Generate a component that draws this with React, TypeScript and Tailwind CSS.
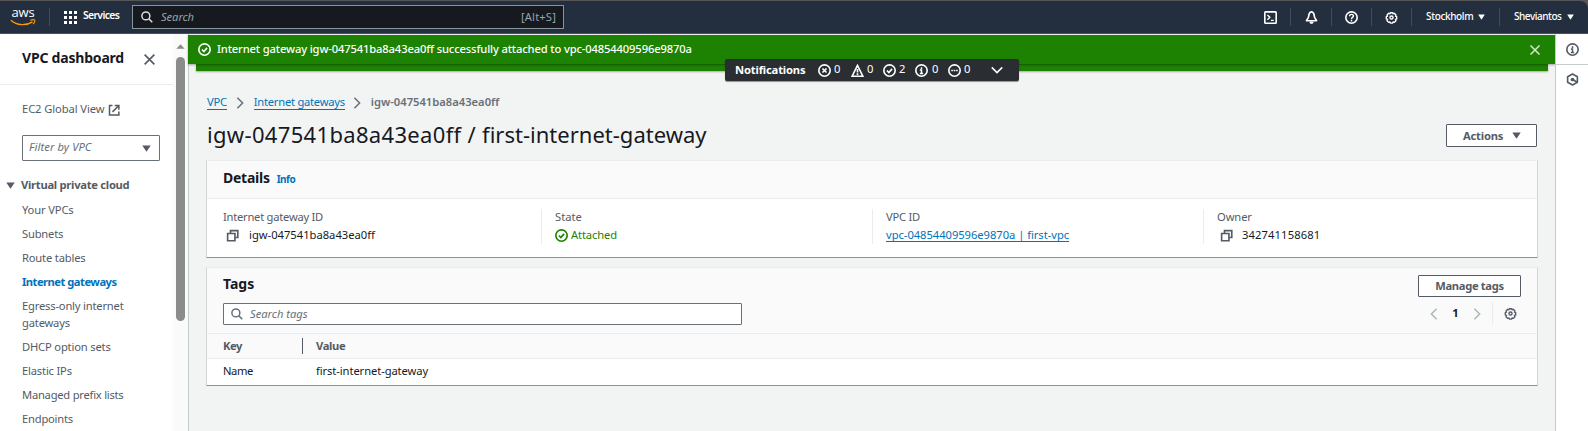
import React, { ReactNode } from "react";

type IconProps = { className?: string };

function Svg({ className = "", children }: { className?: string; children: ReactNode }) {
  return (
    <svg viewBox="0 0 16 16" fill="none" stroke="currentColor" strokeWidth="2" className={`shrink-0 ${className}`}>
      {children}
    </svg>
  );
}

const SearchIcon = ({ className }: IconProps) => (
  <Svg className={className}>
    <circle cx="6.5" cy="6.5" r="5.3" />
    <path d="M15 15l-4.8-4.8" />
  </Svg>
);
const CloseIcon = ({ className }: IconProps) => (
  <Svg className={className}>
    <path d="M2 2l12 12M14 2L2 14" />
  </Svg>
);
const CheckCircle = ({ className }: IconProps) => (
  <Svg className={className}>
    <circle cx="8" cy="8" r="7" />
    <path d="M4.8 8l2.4 2.4L11.2 6" />
  </Svg>
);
const XCircle = ({ className }: IconProps) => (
  <Svg className={className}>
    <circle cx="8" cy="8" r="7" />
    <path d="M5.5 5.5l5 5M10.5 5.5l-5 5" />
  </Svg>
);
const Warning = ({ className }: IconProps) => (
  <Svg className={className}>
    <path d="M8 1.8L1.4 15h13.2z" />
    <path d="M8 6v4.5M8 11.5v2" />
  </Svg>
);
const InfoCircle = ({ className }: IconProps) => (
  <Svg className={className}>
    <circle cx="8" cy="8" r="7" />
    <path d="M8 4v2M6 7.5h2V12M6 11.6h4" strokeWidth="1.8" />
  </Svg>
);
const PendingCircle = ({ className }: IconProps) => (
  <Svg className={className}>
    <circle cx="8" cy="8" r="7" />
    <path d="M4 8h2M7 8h2M10 8h2" />
  </Svg>
);
const HelpCircle = ({ className }: IconProps) => (
  <Svg className={className}>
    <circle cx="8" cy="8" r="7" />
    <path d="M5.6 6.4C5.6 3.4 10.4 3.4 10.4 6.3 10.4 8 8 7.9 8 9.8M8 10.9v1.9" strokeWidth="1.8" />
  </Svg>
);
const Gear = ({ className }: IconProps) => (
  <Svg className={className}>
    <path d="M6.6 1.2h2.8l.5 1.3 1.6-.6 2 2-.6 1.6 1.5.6v2.8l-1.5.6.6 1.6-2 2-1.6-.6-.5 1.5H6.6l-.5-1.5-1.6.6-2-2 .6-1.6-1.5-.6V6.1l1.5-.6-.6-1.6 2-2 1.6.6z" strokeWidth="1.7" strokeLinejoin="round" transform="translate(0 .9)" />
    <circle cx="8" cy="8" r="1.9" strokeWidth="1.7" />
  </Svg>
);
const Bell = ({ className }: IconProps) => (
  <Svg className={className}>
    <path d="M8 1C5.4 1.6 4.6 4 4.5 6.5C4.4 9 2.5 9.5 1.8 12H14.2C13.5 9.5 11.6 9 11.5 6.5C11.4 4 10.6 1.6 8 1z" strokeLinejoin="round" />
    <path d="M6 13.5a2 2 0 0 0 4 0z" fill="currentColor" strokeWidth="1" />
  </Svg>
);
const Terminal = ({ className }: IconProps) => (
  <Svg className={className}>
    <rect x="1" y="1" width="14" height="14" rx="1" />
    <path d="M4.2 4.8L7.2 7.8 4.2 10.8M8.5 11.5h3.5" strokeWidth="1.7" />
  </Svg>
);
const Copy = ({ className }: IconProps) => (
  <Svg className={className}>
    <path d="M2 5.5h9v9H2z" />
    <path d="M5.5 5V2H14.5v8.5H11.5" />
  </Svg>
);
const External = ({ className }: IconProps) => (
  <Svg className={className}>
    <path d="M6 2H2v12.5h12.5V10" />
    <path d="M9 2h5.5v5.5M14.5 2L6 10.5" />
  </Svg>
);
const Hexagon = ({ className }: IconProps) => (
  <Svg className={className}>
    <path d="M8 1.2l6 3.4v6.8l-6 3.4-6-3.4V4.6z" strokeLinejoin="round" />
    <circle cx="8" cy="8" r="2.3" fill="currentColor" stroke="none" />
    <path d="M8 8l5.5 3" />
  </Svg>
);
const Caret = ({ className = "" }: IconProps) => (
  <svg viewBox="0 0 10 8" preserveAspectRatio="none" className={`shrink-0 ${className}`} fill="currentColor">
    <path d="M.3.5h9.4L5 7.8z" />
  </svg>
);
const Chevron = ({ className }: IconProps) => (
  <Svg className={className}>
    <path d="M4.5 1l7 7-7 7" />
  </Svg>
);

const Divider = ({ className = "" }: IconProps) => <span className={`h-[18px] w-px shrink-0 bg-[#414d5c] ${className}`} />;

function AwsLogo() {
  return (
    <div className="flex w-[26px] shrink-0 flex-col items-center">
      <span className="h-[11px] font-['Open_Sans'] text-[13px] leading-[9px] font-medium tracking-[-0.1px] text-white">aws</span>
      <svg viewBox="0 0 26 7" className="h-[7px] w-[26px]" fill="none" stroke="#f90" strokeWidth="1.4">
        <path d="M.8 1.2C7 6.6 16 7 22.5 2.8" />
        <path d="M20.3 1.2c2-.6 3.9-.7 4.3-.2.5.6-.2 2.6-1.4 4" strokeWidth="1.2" />
      </svg>
    </div>
  );
}

function TopBar() {
  return (
    <header className="h-[34px] shrink-0 bg-[#555]">
      <div className="h-px" />
      <div className="flex h-[33px] items-center rounded-tr-lg border-b border-[#45506a] bg-[#232f3e] pl-[10px] text-white">
        <AwsLogo />
        <Divider className="ml-[13px]" />
        <svg viewBox="0 0 13 13" className="ml-[14px] h-[13px] w-[13px] shrink-0" fill="currentColor">
          {[0, 5, 10].map((y) => [0, 5, 10].map((x) => <rect key={`${x}-${y}`} x={x} y={y} width="3" height="3" />))}
        </svg>
        <span className="mt-[-3px] ml-[6px] w-[49px] shrink-0 text-[10.4px] font-semibold tracking-[-0.65px]">Services</span>
        <div className="flex h-6 w-[432px] shrink-0 items-center border border-[#879596] bg-[#16191f] px-[8px] text-[#95a5a6]">
          <SearchIcon className="h-[12px] w-[12px] text-[#d5dbdb]" />
          <span className="mt-[-1px] ml-[8px] flex-1 italic tracking-[-0.06px]">Search</span>
          <span className="mt-[-1px] mr-[-1px] tracking-[0.15px]">[Alt+S]</span>
        </div>
        <div className="flex-1" />
        <Terminal className="h-[13px] w-[13px]" />
        <Divider className="ml-[13px]" />
        <Bell className="ml-[14px] h-[13px] w-[13px]" />
        <Divider className="ml-[13px]" />
        <HelpCircle className="ml-[13px] h-[13px] w-[13px]" />
        <Divider className="ml-[13px]" />
        <Gear className="ml-[13px] h-[13px] w-[13px]" />
        <Divider className="ml-[13px]" />
        <span className="mt-[-1px] ml-[14px] w-[52px] text-[10px] font-medium tracking-[-0.35px]">Stockholm</span>
        <Caret className="mt-[-1px] h-[6px] w-[7px]" />
        <Divider className="ml-[14px]" />
        <span className="mt-[-1px] ml-[14px] w-[53px] text-[10px] font-medium tracking-[-0.46px]">Sheviantos</span>
        <Caret className="mt-[-1px] mr-[14px] h-[6px] w-[7px]" />
      </div>
    </header>
  );
}

function NavItem({ children, className = "" }: { children: ReactNode; className?: string }) {
  return <li className={`mb-[7px] ${className}`}>{children}</li>;
}

function Sidebar() {
  return (
    <aside className="flex w-[189px] shrink-0 overflow-hidden border-r border-[#c6cccc] bg-white text-[#545b64]">
      <div className="w-[173px] shrink-0">
        <div className="flex h-[51px] items-center border-b border-[#eaeded] pl-[22px]">
          <h2 className="mt-[-4px] w-[121px] text-[14px] font-bold tracking-[-0.2px] text-[#16191f]">VPC dashboard</h2>
          <CloseIcon className="h-[13px] w-[13px]" />
        </div>
        <div className="mt-[16px] flex h-[17px] items-center pl-[22px]">
          <span className="mt-[-2px] tracking-[-0.09px]">EC2 Global View</span>
          <External className="ml-[4px] h-[12px] w-[12px]" />
        </div>
        <div className="mt-[17px] ml-[22px] flex h-[26px] w-[138px] items-center justify-between rounded-[1px] border border-[#687078] pr-[8px] pl-[6px] text-[#687078]">
          <span className="mt-[-3px] italic tracking-[0.1px]">Filter by VPC</span>
          <Caret className="h-[7px] w-[9px] text-[#545b64]" />
        </div>
        <div className="mt-[16px] flex h-[17px] items-center pl-[6px] font-bold">
          <Caret className="h-[7px] w-[9px]" />
          <span className="mt-[-2px] ml-[6px] tracking-[-0.27px] whitespace-nowrap">Virtual private cloud</span>
        </div>
        <ul className="mt-[7px] pr-[30px] pl-[22px]">
          <NavItem className="tracking-[-0.15px]">Your VPCs</NavItem>
          <NavItem className="tracking-[-0.2px]">Subnets</NavItem>
          <NavItem className="tracking-[-0.18px]">Route tables</NavItem>
          <NavItem className="font-bold tracking-[-0.51px] text-[#0073bb]">Internet gateways</NavItem>
          <NavItem className="tracking-[-0.19px]">Egress-only internet gateways</NavItem>
          <NavItem className="tracking-[-0.18px]">DHCP option sets</NavItem>
          <NavItem className="tracking-[-0.18px]">Elastic IPs</NavItem>
          <NavItem className="tracking-[-0.24px]">Managed prefix lists</NavItem>
          <NavItem className="tracking-[-0.21px]">Endpoints</NavItem>
        </ul>
      </div>
      <div className="flex w-[15px] flex-col items-center bg-[#fafafa] pt-[10px]">
        <Caret className="h-[5px] w-[9px] rotate-180 text-[#8b8b8b]" />
        <div className="mt-[8px] h-[264px] w-[9px] rounded-full bg-[#8b8b8b]" />
      </div>
    </aside>
  );
}

function Notifications() {
  return (
    <div className="absolute top-[59px] left-[725px] z-20 flex h-[22px] w-[294px] items-center rounded-[2px] bg-[#2a2e33] pl-[10px] text-white shadow-[0_1px_1px_rgba(0,0,0,0.4)]">
      <span className="mt-[-2px] w-[83px] font-bold tracking-[-0.16px]">Notifications</span>
      <XCircle className="h-[13px] w-[13px]" />
      <span className="mt-[-3px] ml-[3px] w-[17px]">0</span>
      <Warning className="h-[13px] w-[13px]" />
      <span className="mt-[-3px] ml-[3px] w-[16px]">0</span>
      <CheckCircle className="h-[13px] w-[13px]" />
      <span className="mt-[-3px] ml-[3px] w-[16px]">2</span>
      <InfoCircle className="h-[13px] w-[13px]" />
      <span className="mt-[-3px] ml-[4px] w-[16px]">0</span>
      <PendingCircle className="h-[13px] w-[13px]" />
      <span className="mt-[-3px] ml-[3px] w-[27px]">0</span>
      <Chevron className="h-[12px] w-[12px] rotate-90" />
    </div>
  );
}

function Field({ label, labelClass = "", first = false, children }: { label: string; labelClass?: string; first?: boolean; children: ReactNode }) {
  return (
    <div className={`h-[35px] shrink-0 ${first ? "w-[318px]" : "w-[331px] border-l border-[#eaeded] pl-[13px]"}`}>
      <div className={`mt-[-1px] h-[17px] text-[#545b64] ${labelClass}`}>{label}</div>
      <div className="mt-[2px] flex h-[17px] items-center">{children}</div>
    </div>
  );
}

function Details() {
  return (
    <section className="mt-[13px] h-[98px] border border-t-[#eaeded] border-r-[#d0d5d5] border-b-[#879596] border-l-[#d0d5d5] bg-white">
      <div className="flex h-[38px] items-center border-b border-[#eaeded] bg-[#fafafa] pl-[16px]">
        <h3 className="mt-[-4px] text-[14px] font-bold tracking-[-0.25px] text-[#16191f]">Details</h3>
        <span className="mt-[-1px] ml-[7px] text-[10px] font-bold tracking-[-0.5px] text-[#0073bb]">Info</span>
      </div>
      <div className="mt-[10px] flex overflow-hidden pl-[16px]">
        <Field label="Internet gateway ID" labelClass="tracking-[-0.25px]" first>
          <Copy className="ml-[3px] h-[13px] w-[13px] text-[#545b64]" />
          <span className="mt-[-2px] ml-[10px]">igw-047541ba8a43ea0ff</span>
        </Field>
        <Field label="State">
          <CheckCircle className="h-[13px] w-[13px] text-[#1d8102]" />
          <span className="mt-[-2px] ml-[3px] tracking-[-0.12px] text-[#1d8102]">Attached</span>
        </Field>
        <Field label="VPC ID" labelClass="tracking-[-0.24px]">
          <a className="border-b border-[#0073bb] leading-[12px] tracking-[-0.04px] text-[#0073bb]">vpc-04854409596e9870a | first-vpc</a>
        </Field>
        <Field label="Owner" labelClass="tracking-[-0.1px]">
          <Copy className="ml-[3px] h-[13px] w-[13px] text-[#545b64]" />
          <span className="mt-[-2px] ml-[9px] tracking-[0.12px]">342741158681</span>
        </Field>
      </div>
    </section>
  );
}

function Tags() {
  return (
    <section className="mt-[9px] h-[119px] border border-t-[#eaeded] border-r-[#d0d5d5] border-b-[#879596] border-l-[#d0d5d5] bg-white">
      <div className="flex h-[66px] justify-between border-b border-[#eaeded] bg-[#fafafa] pr-[16px] pl-[16px]">
        <div>
          <h3 className="mt-[7px] h-[18px] text-[14px] font-bold text-[#16191f]">Tags</h3>
          <div className="mt-[10px] flex h-[22px] w-[519px] items-center rounded-[1px] border border-[#687078] bg-white pl-[7px] text-[#687078]">
            <SearchIcon className="h-[12px] w-[12px]" />
            <span className="mt-[-1px] ml-[7px] italic">Search tags</span>
          </div>
        </div>
        <div className="flex flex-col items-end">
          <button className="mt-[7px] h-[22px] w-[103px] rounded-[1px] border border-[#545b64] bg-white font-bold leading-[18px] tracking-[-0.33px] text-[#545b64]">Manage tags</button>
          <div className="mt-[5px] flex h-[23px] items-center">
            <Chevron className="h-[12px] w-[12px] rotate-180 text-[#aab7b8]" />
            <span className="mt-[-2px] w-[31px] text-center font-bold">1</span>
            <Chevron className="h-[12px] w-[12px] text-[#aab7b8]" />
            <span className="ml-[9px] h-[23px] w-px bg-[#eaeded]" />
            <Gear className="mr-[4px] ml-[11px] h-[13px] w-[13px] text-[#545b64]" />
          </div>
        </div>
      </div>
      <div className="flex h-[25px] items-center border-b border-[#eaeded] bg-[#fafafa] pl-[16px] font-bold text-[#545b64]">
        <span className="mt-[-1px] w-[79px] tracking-[-0.4px]">Key</span>
        <span className="h-[16px] w-px bg-[#545b64]" />
        <span className="mt-[-1px] ml-[13px] tracking-[-0.35px]">Value</span>
      </div>
      <div className="flex h-[26px] items-center pb-[3px] pl-[16px]">
        <span className="w-[93px] tracking-[-0.4px]">Name</span>
        <span className="tracking-[-0.09px]">first-internet-gateway</span>
      </div>
    </section>
  );
}

export default function App() {
  return (
    <div className="relative flex h-[431px] w-[1588px] flex-col overflow-hidden bg-white font-['Noto_Sans',sans-serif] text-[11.2px] leading-[17px] text-[#16191f]">
      <TopBar />
      <div className="flex min-h-0 flex-1">
        <Sidebar />
        <main className="flex w-[1367px] shrink-0 flex-col bg-[#f2f3f3]">
          <div className="z-10 mt-px ml-[-1px] flex h-[29px] w-[1368px] shrink-0 items-center bg-[#1d8102] pr-[15px] pl-[10px] text-white shadow-[0_1px_2px_rgba(0,0,0,0.35)]">
            <CheckCircle className="h-[13px] w-[13px]" />
            <span className="mt-[-2px] ml-[6px] flex-1 font-medium tracking-[-0.14px]">
              Internet gateway igw-047541ba8a43ea0ff successfully attached to vpc-04854409596e9870a
            </span>
            <CloseIcon className="h-[12px] w-[12px] text-[#d5e8d0]" />
          </div>
          <div className="ml-[7px] h-[7px] w-[1352px] shrink-0 bg-[#1d8102] shadow-[0_1px_2px_rgba(0,0,0,0.3)]" />
          <div className="mr-[18px] ml-[17px]">
            <div className="mt-[23px] flex h-[17px] items-center pl-px">
              <a className="border-b border-[#0073bb] leading-[14px] tracking-[-0.25px] text-[#0073bb]">VPC</a>
              <Chevron className="ml-[7px] h-[12px] w-[12px] text-[#687078]" />
              <a className="ml-[8px] border-b border-[#0073bb] leading-[14px] tracking-[-0.25px] text-[#0073bb]">Internet gateways</a>
              <Chevron className="ml-[6px] h-[12px] w-[12px] text-[#687078]" />
              <span className="mt-[-2px] ml-[8px] font-semibold text-[#687078]">igw-047541ba8a43ea0ff</span>
            </div>
            <div className="mt-[13px] flex h-[23px] items-center justify-between">
              <h1 className="mt-[-3px] pl-px text-[22px] leading-[23px] tracking-[0.01px]">
                <span className="tracking-[0.33px]">igw-047541ba8a43ea0ff / </span>first-internet-gateway
              </h1>
              <button className="mr-px flex h-[23px] w-[91px] items-center rounded-[1px] border border-[#545b64] bg-white pl-[16px] font-bold text-[#545b64]">
                <span className="mt-[-1px] w-[49px] text-left tracking-[-0.2px]">Actions</span>
                <Caret className="h-[7px] w-[9px]" />
              </button>
            </div>
            <Details />
            <Tags />
          </div>
        </main>
        <aside className="z-10 ml-[-1px] flex flex-1 flex-col items-center border-l border-[#c6cccc] bg-white text-[#545b64]">
          <div className="flex h-[31px] w-full items-center justify-center border-b border-[#c6cccc]">
            <InfoCircle className="h-[13px] w-[13px]" />
          </div>
          <Hexagon className="mt-[8px] h-[13px] w-[13px]" />
        </aside>
      </div>
      <Notifications />
    </div>
  );
}
